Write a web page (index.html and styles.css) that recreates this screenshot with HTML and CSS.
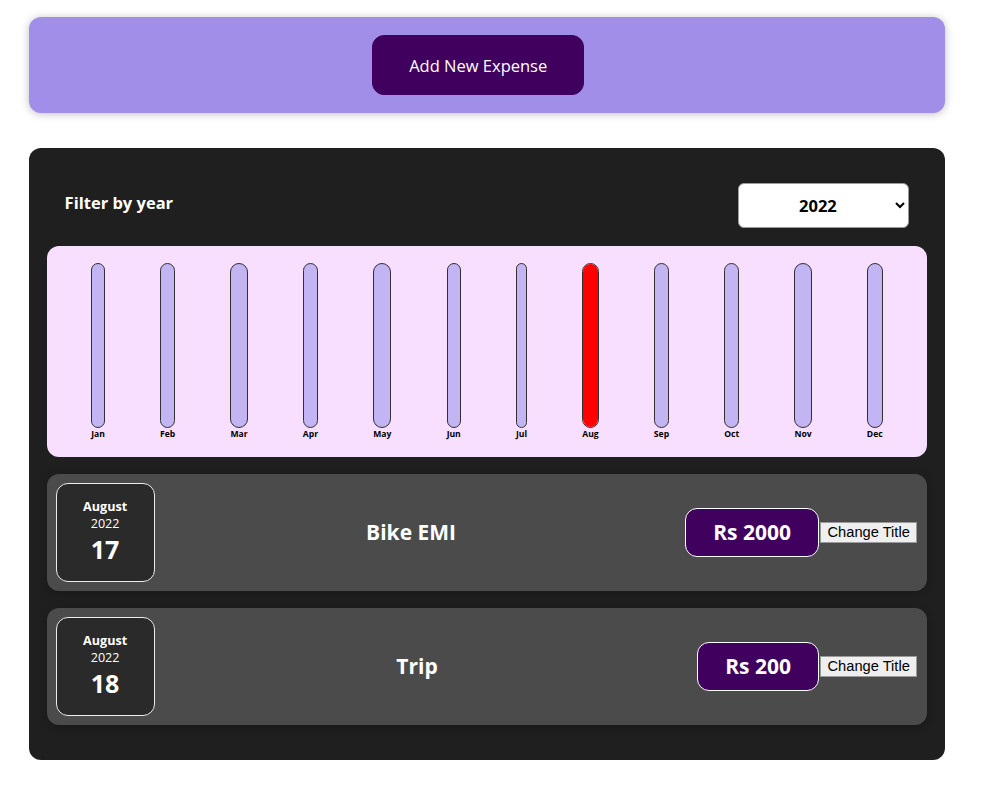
FILE: index.html
```html
<!DOCTYPE html>
<html lang="en">
<head>
<meta charset="utf-8">
<title>Expenses</title>
<link rel="stylesheet" href="styles.css">
</head>
<body>
<div class="app">
  <div class="new-expense">
    <button class="new-expense__btn">Add New Expense</button>
  </div>

  <div class="expenses">
    <div class="filter">
      <div class="filter__control">
        <label class="filter__label">Filter by year</label>
        <select class="filter__select">
          <option>2022</option>
          <option>2021</option>
          <option>2020</option>
          <option>2019</option>
        </select>
      </div>
    </div>

    <div class="chart">
      <div class="chart-bar"><div class="chart-bar__inner"></div><div class="chart-bar__label">Jan</div></div>
      <div class="chart-bar"><div class="chart-bar__inner"></div><div class="chart-bar__label">Feb</div></div>
      <div class="chart-bar"><div class="chart-bar__inner"></div><div class="chart-bar__label">Mar</div></div>
      <div class="chart-bar"><div class="chart-bar__inner"></div><div class="chart-bar__label">Apr</div></div>
      <div class="chart-bar"><div class="chart-bar__inner"></div><div class="chart-bar__label">May</div></div>
      <div class="chart-bar"><div class="chart-bar__inner"></div><div class="chart-bar__label">Jun</div></div>
      <div class="chart-bar"><div class="chart-bar__inner"></div><div class="chart-bar__label">Jul</div></div>
      <div class="chart-bar"><div class="chart-bar__inner"><div class="chart-bar__fill" style="height:100%"></div></div><div class="chart-bar__label">Aug</div></div>
      <div class="chart-bar"><div class="chart-bar__inner"></div><div class="chart-bar__label">Sep</div></div>
      <div class="chart-bar"><div class="chart-bar__inner"></div><div class="chart-bar__label">Oct</div></div>
      <div class="chart-bar"><div class="chart-bar__inner"></div><div class="chart-bar__label">Nov</div></div>
      <div class="chart-bar"><div class="chart-bar__inner"></div><div class="chart-bar__label">Dec</div></div>
    </div>

    <div class="expense-item">
      <div class="expense-date">
        <div class="expense-date__month">August</div>
        <div class="expense-date__year">2022</div>
        <div class="expense-date__day">17</div>
      </div>
      <div class="expense-item__description">
        <h2 class="expense-item__title">Bike EMI</h2>
        <div class="expense-item__price">Rs 2000</div>
      </div>
      <button class="change-btn">Change Title</button>
    </div>

    <div class="expense-item">
      <div class="expense-date">
        <div class="expense-date__month">August</div>
        <div class="expense-date__year">2022</div>
        <div class="expense-date__day">18</div>
      </div>
      <div class="expense-item__description">
        <h2 class="expense-item__title">Trip</h2>
        <div class="expense-item__price">Rs 200</div>
      </div>
      <button class="change-btn">Change Title</button>
    </div>
  </div>
</div>
</body>
</html>
```

FILE: styles.css
```css
* {
  box-sizing: border-box;
}

body {
  margin: 0;
  background: #ffffff;
  font-family: "Open Sans", "Noto Sans", sans-serif;
}

.app {
  padding: 17px 0 36px 29px;
}

/* New expense card */
.new-expense {
  width: 916px;
  padding: 18px;
  background: #a08ee9;
  border-radius: 12px;
  text-align: center;
  box-shadow: 0 1px 8px rgba(0, 0, 0, 0.25);
}

.new-expense__btn {
  display: inline-block;
  vertical-align: top;
  font-family: inherit;
  font-size: 16.5px;
  line-height: 23px;
  padding: 17.6px 36px;
  margin-right: 17.6px;
  border: 1px solid #40005d;
  background: #40005d;
  color: #ffffff;
  border-radius: 12px;
  cursor: pointer;
}

/* Expenses card */
.expenses {
  margin-top: 35px;
  width: 916px;
  padding: 17.6px 17.6px 18.6px;
  background: #1f1f1f;
  border-radius: 12px;
}

.filter {
  color: #ffffff;
  padding: 0 18px;
}

.filter__control {
  display: flex;
  align-items: center;
  justify-content: space-between;
  margin: 17px 0 18px;
}

.filter__label {
  font-weight: bold;
  font-size: 16.5px;
  margin-bottom: 5px;
}

.filter__select {
  width: 171px;
  height: 45px;
  font-family: inherit;
  font-size: 16.5px;
  font-weight: bold;
  text-align: center;
  border-radius: 6px;
  border: 1px solid #9a9a9a;
  background: #ffffff;
  color: #000000;
  padding: 0 10px;
}

/* Chart */
.chart {
  height: 211px;
  padding: 17px;
  border-radius: 12px;
  background: #f8dfff;
  display: flex;
  justify-content: space-around;
}

.chart-bar {
  height: 100%;
  display: flex;
  flex-direction: column;
  align-items: center;
}

.chart-bar__inner {
  flex: 1;
  width: 100%;
  border: 1px solid #313131;
  border-radius: 12px;
  background: #c3b4f3;
  overflow: hidden;
  display: flex;
  flex-direction: column;
  justify-content: flex-end;
}

.chart-bar__fill {
  width: 100%;
  background: #ff0000;
}

.chart-bar__label {
  font-weight: bold;
  font-size: 8.6px;
  line-height: 12px;
  color: #000000;
  text-align: center;
}

/* Expense items */
.expense-item {
  display: flex;
  align-items: center;
  justify-content: space-between;
  padding: 9px 10px 9px 9px;
  margin: 17px 0;
  border-radius: 12px;
  background: #4b4b4b;
  box-shadow: 0 2px 8px rgba(0, 0, 0, 0.25);
}

.expense-date {
  display: flex;
  flex-direction: column;
  align-items: center;
  justify-content: center;
  width: 99px;
  height: 99px;
  border: 1px solid #ececec;
  background: #2a2a2a;
  color: #ffffff;
  border-radius: 12px;
  flex-shrink: 0;
}

.expense-date__month {
  font-size: 12.6px;
  font-weight: bold;
  line-height: 17px;
}

.expense-date__year {
  font-size: 12.6px;
  line-height: 17px;
}

.expense-date__day {
  font-size: 25px;
  font-weight: bold;
  line-height: 34px;
}

.expense-item__description {
  flex: 1;
  display: flex;
  align-items: center;
  gap: 17.6px;
}

.expense-item__title {
  flex: 1;
  margin: 0 17.6px;
  font-size: 21px;
  font-weight: bold;
  color: #ffffff;
  text-align: center;
}

.expense-item__price {
  font-size: 21px;
  font-weight: bold;
  line-height: 29px;
  color: #ffffff;
  background: #40005d;
  border: 1px solid #ffffff;
  padding: 9px 27px;
  border-radius: 12px;
}

.change-btn {
  font-family: "Liberation Sans", Arial, sans-serif;
  font-size: 14.667px;
  line-height: 17px;
  height: 21px;
  padding: 1px 6.6px;
  margin-left: 1px;
  background: #efefef;
  color: #000000;
  border: 1px solid #9a9a9a;
  border-radius: 0;
}
```
